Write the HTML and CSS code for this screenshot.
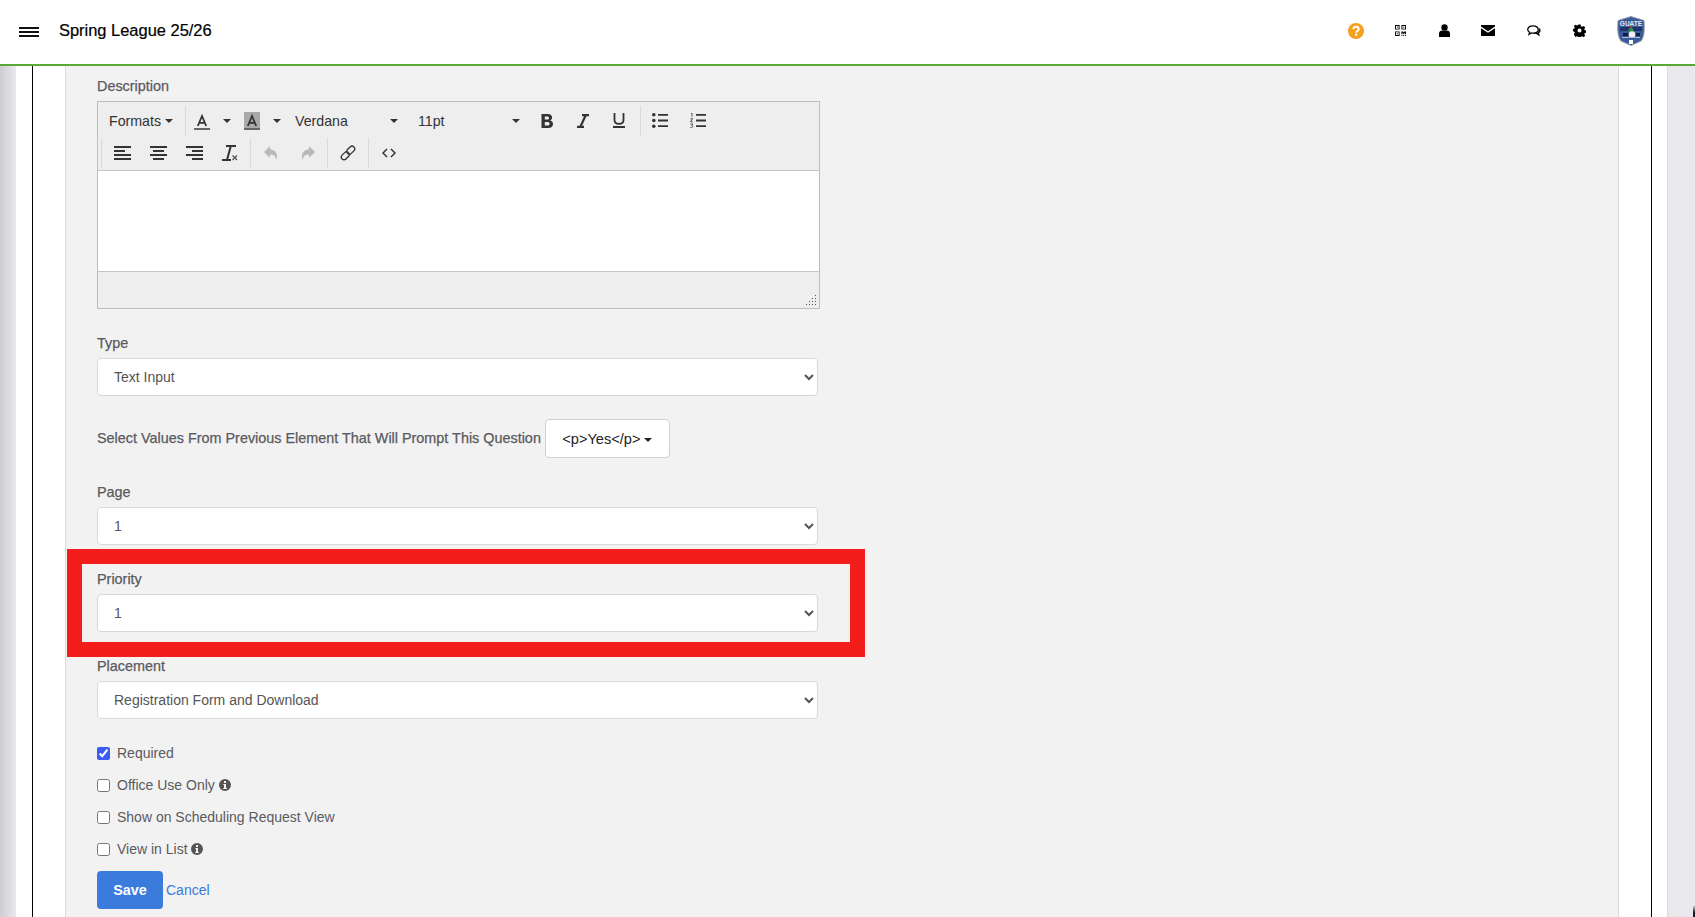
FILE: index.html
```html
<!DOCTYPE html>
<html lang="en">
<head>
<meta charset="utf-8">
<title>Spring League 25/26</title>
<link rel="stylesheet" href="styles.css">
</head>
<body>
<header class="topbar">
  <svg class="burger" width="20" height="10" viewBox="0 0 20 10"><path d="M0 1h20M0 5h20M0 9h20" stroke="#111" stroke-width="2"/></svg>
  <h1 class="title">Spring League 25/26</h1>
  <nav class="top-icons">
    <svg class="ti" width="16" height="16" viewBox="0 0 16 16"><circle cx="8" cy="8" r="8" fill="#f5a01d"/><path d="M5.4 6.2C5.5 4.6 6.6 3.8 8 3.8s2.7.9 2.7 2.2c0 1.9-2.4 1.9-2.5 3.7" fill="none" stroke="#fff" stroke-width="1.9"/><rect x="7.1" y="10.7" width="2.1" height="2.1" fill="#fff"/></svg>
    <svg class="ti" width="11" height="11" viewBox="0 0 12 12"><path fill="#000" fill-rule="evenodd" d="M0 0h5v5H0zM1 1v3h3V1zM7 0h5v5H7zM8 1v3h3V1zM0 7h5v5H0zM1 8v3h3V8zM2 2h1v1H2zM9 2h1v1H9zM2 9h1v1H2zM7 7h2v1h1V7h2v3h-1V9h-1v1H9V9H8v1H7zM7 11h1v1H7zM9 11h1v1H9zM11 11h1v1h-1z"/></svg>
    <svg class="ti" width="11" height="13" viewBox="0 0 11 13"><circle cx="5.5" cy="3.4" r="3.2" fill="#000"/><path d="M0 13V9.6C0 7.8 1.6 6.6 3 6.6h5c1.5 0 3 1.2 3 3V13z" fill="#000"/></svg>
    <svg class="ti" width="14" height="11" viewBox="0 0 14 11"><path d="M0 0h14v1.6L7 6.3 0 1.6z M0 3.2L7 7.8l7-4.6V11H0z" fill="#000"/></svg>
    <svg class="ti" width="14" height="12" viewBox="0 0 14 12"><path d="M6 .8c3 0 5.300 1.600 5.300 3.700S9 8.200 6 8.200c-.6 0-1.200 0-1.700-.2L2 9.400l.6-2.200C1.300 6.500.7 5.600.7 4.500.7 2.400 3 .8 6 .8z" fill="#fff" stroke="#000" stroke-width="1.300"/><path d="M12.200 2.800c1.500 1 2.200 3.800-.2 5.300l.9 3.400-3.500-2.500c-1 .1-2 0-2.600-.3 3 0 5.800-1.700 5.400-5.900z" fill="#000"/></svg>
    <svg class="ti" width="13" height="13" viewBox="0 0 13 13"><path fill="#000" fill-rule="evenodd" d="M5.300 0h2.400l.4 1.900 1.300.6 1.700-1 1.600 1.700-1 1.600.5 1.300 1.800.4v2.300l-1.800.4-.5 1.300 1 1.600-1.700 1.600-1.600-1-1.300.5-.4 1.800H5.300l-.4-1.800-1.300-.5-1.600 1L.3 10.600l1-1.600-.5-1.300L-1 7.300V5l1.800-.4.500-1.300-1-1.600L1.900.1l1.700 1 1.300-.6zM6.500 4.300a2.200 2.200 0 1 0 0 4.400 2.200 2.200 0 0 0 0-4.400z" transform="translate(.55 .55) scale(.92)"/></svg>
    <svg class="crest" width="28" height="30" viewBox="0 0 28 30"><path d="M1 4.500 14 .5l13 4c.6 9 .4 16-3 20.500l-10 4.500L4 25C.6 20.500.4 13.500 1 4.500z" fill="#3b5c98" stroke="#8f9bb0"/><text class="crest-name" x="14" y="9.500" text-anchor="middle">GUATE</text><path d="M3 11h22v4H3z" fill="#1b3469"/><path d="M14 9.500l3.500 6.500h-7z" fill="#2f8a4c"/><path d="M14 9.500l1.300 2.500h-2.600z" fill="#c8323a"/><circle cx="15" cy="18.500" r="3.200" fill="#f2f2f2"/><path d="M6 17h5v3H6zM19 17h4v3h-4z" fill="#12203f"/><path d="M5 21h18v1H5z" fill="#a8b6d2"/><path d="M12 24h4v4h-4z" fill="#fff"/></svg>
  </nav>
</header>

<div class="workspace">
  <div class="frame">
    <div class="frame-inner">
      <main class="panel">
        <div class="field">
          <label class="lbl">Description</label>
          <div class="editor">
            <div class="tb">
              <div class="tb-row">
                <span class="tool menu w-formats">Formats<i class="caret c-near"></i></span>
                <span class="sep"></span>
                <span class="tool w-color"><svg width="16" height="18" viewBox="0 0 16 18"><path d="M3.800 14 8 4l4.200 10M5.200 10.800h5.600" fill="none" stroke="#333" stroke-width="1.800"/><rect y="16" width="16" height="2" fill="#666"/></svg><i class="caret"></i></span>
                <span class="tool w-color"><svg width="16" height="18" viewBox="0 0 16 18"><rect width="16" height="16" fill="#a9a9a9"/><path d="M3.800 14 8 4l4.200 10M5.200 10.800h5.600" fill="none" stroke="#333" stroke-width="1.800"/><rect y="16" width="16" height="2" fill="#666"/></svg><i class="caret"></i></span>
                <span class="tool menu w-font">Verdana<i class="caret push"></i></span>
                <span class="tool menu w-size">11pt<i class="caret push"></i></span>
                <span class="tool w-ic"><svg width="12" height="14" viewBox="0 0 12 14"><path fill="#333" fill-rule="evenodd" d="M.5 0h6.300c2.700 0 4.300 1.300 4.300 3.500 0 1.500-.8 2.500-2 2.900 1.800.3 2.900 1.600 2.900 3.500 0 2.700-1.900 4.100-4.700 4.100H.5zM3.800 2.400v3.200h2.400C7.400 5.600 8 5 8 3.900 8 2.900 7.400 2.400 6.200 2.400zm0 5.500v3.700h2.700c1.400 0 2.100-.7 2.100-1.900S7.800 7.900 6.400 7.900z"/></svg></span>
                <span class="tool w-ic"><svg width="12" height="14" viewBox="0 0 12 14"><path d="M5 1.100h7M0 12.900h7M8.800 1 3.300 13" fill="none" stroke="#333" stroke-width="2.200"/></svg></span>
                <span class="tool w-ic"><svg width="12" height="15" viewBox="0 0 12 15"><path d="M1.500 0v7c0 2.600 1.800 3.800 4.500 3.800s4.500-1.200 4.500-3.800V0" fill="none" stroke="#333" stroke-width="1.800"/><rect y="13" width="12" height="2" fill="#333"/></svg></span>
                <span class="sep s-b"></span>
                <span class="tool w-list"><svg width="16" height="15" viewBox="0 0 16 15"><circle cx="1.800" cy="1.800" r="1.800" fill="#333"/><circle cx="1.800" cy="7.500" r="1.800" fill="#333"/><circle cx="1.800" cy="13.200" r="1.800" fill="#333"/><path d="M6 1.800h10M6 7.500h10M6 13.200h10" stroke="#333" stroke-width="1.800"/></svg></span>
                <span class="tool w-list"><svg width="16" height="15" viewBox="0 0 16 15"><path d="M6 1.800h10M6 7.500h10M6 13.200h10" stroke="#333" stroke-width="1.800"/><path d="M1 .8 2 .3v3.500M.4 5.700h2.200L.5 8.800h2.400M.4 11h2.300l-1 1.500c1.400 0 1.400 2-.1 2H.4" fill="none" stroke="#333" stroke-width=".8"/></svg></span>
              </div>
              <div class="tb-row row2">
                <span class="sep s-first"></span>
                <span class="tool w-al"><svg width="17" height="14" viewBox="0 0 17 14"><path d="M0 1h17M0 5h11M0 9h17M0 13h17" stroke="#333" stroke-width="1.800"/></svg></span>
                <span class="tool w-al"><svg width="17" height="14" viewBox="0 0 17 14"><path d="M0 1h17M3 5h11M0 9h17M3 13h11" stroke="#333" stroke-width="1.800"/></svg></span>
                <span class="tool w-al"><svg width="17" height="14" viewBox="0 0 17 14"><path d="M0 1h17M6 5h11M0 9h17M6 13h11" stroke="#333" stroke-width="1.800"/></svg></span>
                <span class="tool w-al"><svg width="16" height="16" viewBox="0 0 16 16"><path d="M4 1h10M0 15h9M8.800 1 5 15" fill="none" stroke="#333" stroke-width="2"/><path d="M10.500 10.500l4.500 4.500M15 10.500l-4.500 4.500" stroke="#555" stroke-width="1.300"/></svg></span>
                <span class="sep s-a"></span>
                <span class="tool w-un"><svg width="13" height="14" viewBox="0 0 13 14"><path d="M6 0v3.500c4 0 7 2.500 7 7 0 1-.2 2.500-1 3.500 0-4-2-5.500-6-5.500V12L0 6z" fill="#b8b8b8"/></svg></span>
                <span class="tool w-un"><svg width="13" height="14" viewBox="0 0 13 14"><path d="M7 0v3.500c-4 0-7 2.500-7 7 0 1 .2 2.500 1 3.500 0-4 2-5.500 6-5.500V12l6-6z" fill="#b8b8b8"/></svg></span>
                <span class="sep"></span>
                <span class="tool w-link"><svg width="16" height="16" viewBox="0 0 16 16"><g fill="none" stroke="#333" stroke-width="1.300"><rect x="6.200" y="2.500" width="9" height="5.400" rx="2.700" transform="rotate(-45 10.700 5.200)"/><rect x="0.800" y="8.100" width="9" height="5.400" rx="2.700" transform="rotate(-45 5.300 10.800)"/></g></svg></span>
                <span class="sep"></span>
                <span class="tool w-link"><svg width="14" height="10" viewBox="0 0 14 10"><path d="M5 1 1 5l4 4M9 1l4 4-4 4" fill="none" stroke="#333" stroke-width="1.500"/></svg></span>
              </div>
            </div>
            <div class="edit-area"></div>
            <div class="statusbar"><svg class="grip" width="10" height="10" viewBox="0 0 10 10"><path d="M9 0h1v1H9zM9 3h1v1H9zM6 3h1v1H6zM9 6h1v1H9zM6 6h1v1H6zM3 6h1v1H3zM9 9h1v1H9zM6 9h1v1H6zM3 9h1v1H3zM0 9h1v1H0z" fill="#555"/></svg></div>
          </div>
        </div>

        <div class="field">
          <label class="lbl" for="f-type">Type</label>
          <select class="ctl" id="f-type"><option>Text Input</option></select>
        </div>

        <div class="prompt-row">
          <span class="lbl-inline">Select Values From Previous Element That Will Prompt This Question</span>
          <button class="drop" type="button">&lt;p&gt;Yes&lt;/p&gt;<i class="caret c-drop"></i></button>
        </div>

        <div class="field">
          <label class="lbl" for="f-page">Page</label>
          <select class="ctl" id="f-page"><option>1</option></select>
        </div>
        <div class="field">
          <label class="lbl" for="f-prio">Priority</label>
          <select class="ctl" id="f-prio"><option>1</option></select>
        </div>
        <div class="field">
          <label class="lbl" for="f-place">Placement</label>
          <select class="ctl" id="f-place"><option>Registration Form and Download</option></select>
        </div>

        <div class="checks">
          <label class="chk"><input type="checkbox" checked>Required</label>
          <label class="chk"><input type="checkbox">Office Use Only <svg class="info" width="12" height="12" viewBox="0 0 12 12"><path fill="#555" fill-rule="evenodd" d="M6 0a6 6 0 1 1 0 12A6 6 0 0 1 6 0zM5 2v2h2V2zM4.300 5v1H5v3H4.200v1h3.600V9H7V5z"/></svg></label>
          <label class="chk"><input type="checkbox">Show on Scheduling Request View</label>
          <label class="chk"><input type="checkbox">View in List <svg class="info" width="12" height="12" viewBox="0 0 12 12"><path fill="#555" fill-rule="evenodd" d="M6 0a6 6 0 1 1 0 12A6 6 0 0 1 6 0zM5 2v2h2V2zM4.300 5v1H5v3H4.200v1h3.600V9H7V5z"/></svg></label>
        </div>

        <div class="actions">
          <button class="save" type="button">Save</button>
          <a class="cancel" href="#">Cancel</a>
        </div>
      </main>
    </div>
  </div>
</div>
<div class="highlight"></div>
<div class="corner"></div>
</body>
</html>
```

FILE: styles.css
```css
* { box-sizing: border-box; }
html, body { margin: 0; height: 100%; }
body {
  display: flex;
  flex-direction: column;
  height: 100vh;
  overflow: hidden;
  font-family: "Liberation Sans", Arial, sans-serif;
  font-size: 14px;
  color: #5a5a5e;
  background: #e9e9ed;
  position: relative;
}
.topbar {
  flex: none;
  height: 66px;
  display: flex;
  align-items: center;
  padding: 0 0 3px 19px;
  background: #fff;
  border-bottom: 2px solid #5ca836;
}
.burger { flex: none; margin-top: 3px; }
.title {
  margin: 0 0 0 20px;
  font-size: 16.45px;
  font-weight: 400;
  color: #000;
  -webkit-text-stroke: .2px #000;
}
.top-icons {
  margin-left: auto;
  display: flex;
  align-items: center;
  width: 347px;
  padding-right: 51px;
}
.ti { flex: none; display: block; }
.ti:nth-child(2) { margin-left: 31px; }
.ti:nth-child(3) { margin-left: 33px; }
.ti:nth-child(4) { margin-left: 31px; }
.ti:nth-child(5) { margin-left: 32px; }
.ti:nth-child(6) { margin-left: 32px; }
.crest { flex: none; margin: 1px 0 0 31px; }
.crest-name {
  font-family: "Liberation Sans", Arial, sans-serif;
  font-size: 6.5px;
  font-weight: 700;
  fill: #e4e8f0;
}

.workspace {
  flex: 1;
  min-height: 0;
  display: flex;
  padding: 0 27px 0 16px;
  background: linear-gradient(to right, #cdcdd1, #e9e9ed 16px);
}
.frame {
  flex: 1;
  min-width: 0;
  display: flex;
  padding: 0 15px 0 16px;
  background: #fff;
  border-right: 1px solid #dcdcdc;
}
.frame-inner {
  flex: 1;
  min-width: 0;
  display: flex;
  padding: 0 32px;
  border-left: 1px solid #000;
  border-right: 1px solid #000;
}
.panel {
  flex: 1;
  min-width: 0;
  padding: 13px 0 0 31px;
  background: #f2f2f3;
  border-left: 1px solid #dcdcdc;
  border-right: 1px solid #dcdcdc;
}

.field { margin-bottom: 27px; width: 723px; }
.lbl {
  display: block;
  font-size: 14.4px;
  line-height: 16px;
  margin: -1px 0 7px;
  -webkit-text-stroke: .25px #5a5a5e;
}
.ctl {
  display: block;
  width: 721px;
  height: 38px;
  padding: 0 12px;
  font: inherit;
  color: #555;
  background-color: #fff;
  border: 1px solid #d8d8d8;
  border-radius: 4px;
}

.editor {
  height: 208px;
  border: 1px solid #bdbdbd;
  display: flex;
  flex-direction: column;
  background: #eee;
}
.tb { height: 69px; flex: none; border-bottom: 1px solid #c5c5c5; padding-top: 3px; }
.tb-row { display: flex; align-items: center; height: 31px; }
.row2 { margin-top: 1px; padding-left: 3px; }
.tool { display: flex; align-items: center; justify-content: center; flex: none; height: 30px; color: #333; }
.menu { justify-content: flex-start; font-size: 14.2px; }
.sep { flex: none; width: 1px; height: 30px; background: #d9d9d9; }
.caret {
  display: inline-block;
  width: 0; height: 0;
  margin-left: 13px;
  border-top: 4px solid #333;
  border-left: 4px solid transparent;
  border-right: 4px solid transparent;
}
.c-near { margin-left: 4px; }
.push { margin-left: auto; }
.w-formats { width: 87px; padding-left: 11px; }
.w-color { width: 50px; padding-left: 8px; justify-content: flex-start; }
.w-font { width: 121px; padding: 0 9px; }
.w-size { width: 122px; padding: 0 9px 0 11px; }
.w-ic { width: 36px; }
.s-b { margin-left: 3px; }
.w-list { width: 38px; }
.w-al { width: 36px; }
.s-first + .w-al { margin-left: 2px; }
.s-a { margin-left: 2px; }
.w-un { width: 38px; }
.w-link { width: 40px; }

.edit-area { height: 101px; flex: none; background: #fff; border-bottom: 1px solid #c5c5c5; }
.statusbar { flex: 1; position: relative; }
.grip { position: absolute; right: 3px; bottom: 3px; }

.prompt-row {
  display: flex;
  align-items: center;
  height: 39px;
  margin: -4px 0 27px;
}
.lbl-inline {
  font-size: 14.4px;
  margin: -2px 4px 0 0;
  -webkit-text-stroke: .25px #5a5a5e;
}
.drop {
  width: 125px;
  height: 39px;
  font: inherit;
  font-size: 14.6px;
  color: #222;
  background: #fff;
  border: 1px solid #d0d0d0;
  border-radius: 4px;
}
.c-drop { margin-left: 4px; vertical-align: 2px; border-top-color: #222; }

.checks { display: flex; flex-direction: column; gap: 16px; width: 600px; margin-top: -1px; }
.chk { display: flex; align-items: center; height: 16px; line-height: 16px; white-space: pre; }
.chk input { margin: 0 7px 0 0; width: 13px; height: 13px; accent-color: #3b5bf5; flex: none; }
.info { margin-left: 0; flex: none; }

.actions { display: flex; align-items: center; margin-top: 14px; }
.save {
  width: 66px;
  height: 38px;
  font: inherit;
  font-size: 14.4px;
  font-weight: 700;
  color: #fff;
  background: #3a7bdc;
  border: 0;
  border-radius: 4px;
}
.cancel { margin-left: 3px; color: #3a7bdc; text-decoration: none; }

.highlight {
  position: absolute;
  left: 67px;
  top: 549px;
  width: 798px;
  height: 108px;
  border: 15px solid #f31e1c;
  pointer-events: none;
}
.corner {
  position: absolute;
  right: 0;
  bottom: 0;
  width: 2px;
  height: 12px;
  background: linear-gradient(to bottom, #e9e9ed, #1a1a2a 60%);
}
```
